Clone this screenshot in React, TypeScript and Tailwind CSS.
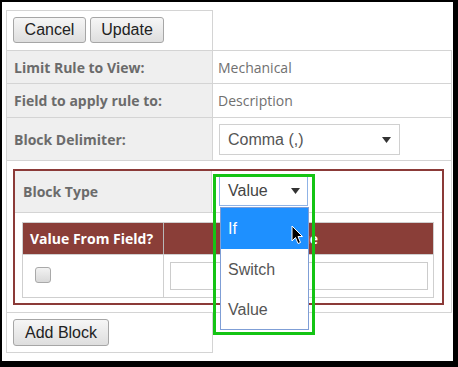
import React from "react";

const label = "font-['Open_Sans',sans-serif] text-[14px] font-bold text-[#6b6b6b]";
const value = "font-['Open_Sans',sans-serif] text-[14px] text-[#707070]";
const btn =
  "h-[26px] border border-[#a6a6a6] rounded-[3px] bg-gradient-to-b from-[#f6f6f6] to-[#dedede] font-['Liberation_Sans',Arial,sans-serif] text-[16px] text-[#222] flex items-center justify-center";

function Arrow() {
  return (
    <svg width="9" height="6" viewBox="0 0 9 6">
      <path d="M0 0 L9 0 L4.5 6 Z" fill="#333" />
    </svg>
  );
}

export default function App() {
  return (
    <div className="w-[458px] h-[367px] bg-black pt-[2px] pl-[2px]">
      <div className="relative w-[451px] h-[359px] bg-white pl-[4px] pt-[8px]">
        <div className="flex flex-col w-[446px]">
          {/* Row 1 */}
          <div className="w-[207px] h-[40px] border-l border-t border-r border-[#d4d4d4] flex gap-[4px] pl-[6px] pt-[6px]">
            <div className={`${btn} w-[73px]`}>Cancel</div>
            <div className={`${btn} w-[74px]`}>Update</div>
          </div>
          {/* Row 2 */}
          <div className="flex h-[33px]">
            <div className={`w-[206px] border-l border-t border-[#d4d4d4] bg-[#efefef] flex items-center pl-[7px] ${label}`}>
              Limit Rule to View:
            </div>
            <div className={`w-[240px] border-l border-r border-t border-[#d4d4d4] flex items-center pl-[5px] ${value}`}>
              Mechanical
            </div>
          </div>
          {/* Row 3 */}
          <div className="flex h-[34px]">
            <div className={`w-[206px] border-l border-t border-[#d4d4d4] bg-[#efefef] flex items-center pl-[7px] ${label}`}>
              Field to apply rule to:
            </div>
            <div className={`w-[240px] border-l border-r border-t border-[#d4d4d4] flex items-center pl-[5px] ${value}`}>
              Description
            </div>
          </div>
          {/* Row 4 */}
          <div className="flex h-[43px]">
            <div className={`w-[206px] border-l border-t border-[#d4d4d4] bg-[#efefef] flex items-center pl-[7px] ${label}`}>
              Block Delimiter:
            </div>
            <div className="w-[240px] border-l border-r border-t border-[#d4d4d4] pl-[6px] pt-[6px]">
              <div className="w-[181px] h-[31px] border border-[#d0d0d0] bg-white flex items-center justify-between pl-[8px] pr-[8px] font-['Liberation_Sans',Arial,sans-serif] text-[16px] text-[#555]">
                <span>Comma (,)</span>
                <Arrow />
              </div>
            </div>
          </div>
          {/* Row 5 */}
          <div className="w-[446px] h-[153px] border border-[#d4d4d4] pl-[6px] pt-[8px]">
            <div className="w-[431px] h-[136px] border-2 border-[#8b3a38] flex flex-col">
              <div className="flex h-[42px] border-b border-[#d4d4d4]">
                <div className={`w-[197px] bg-[#efefef] border-r border-[#d4d4d4] flex items-center pl-[8px] ${label}`}>
                  Block Type
                </div>
                <div className="flex-1 pl-[7px] pt-[5px]">
                  <div className="w-[89px] h-[30px] border border-[#8fb3e6] bg-white flex items-center justify-between pl-[8px] pr-[7px] font-['Liberation_Sans',Arial,sans-serif] text-[16px] text-[#444]">
                    <span>Value</span>
                    <Arrow />
                  </div>
                </div>
              </div>
              <div className="pl-[7px] pt-[9px]">
                <div className="w-[412px] h-[76px] border border-[#cfcfcf] flex flex-col">
                  <div className="flex h-[32px] bg-[#8a3e38] border-b border-[#cfcfcf] font-['Open_Sans',sans-serif] text-[14px] font-bold text-white">
                    <div className="w-[141px] border-r border-[#b8b8b8] flex items-center pl-[7px]">Value From Field?</div>
                    <div className="flex-1 flex items-center justify-center">Value</div>
                  </div>
                  <div className="flex flex-1">
                    <div className="w-[141px] border-r border-[#cfcfcf] pl-[12px] pt-[12px]">
                      <div className="w-[16px] h-[16px] rounded-[3px] border border-[#a9a9a9] bg-gradient-to-b from-[#f2f2f2] to-[#d9d9d9]" />
                    </div>
                    <div className="flex-1 pl-[6px] pt-[7px]">
                      <div className="w-[258px] h-[28px] border border-[#cccccc] bg-white" />
                    </div>
                  </div>
                </div>
              </div>
            </div>
          </div>
          {/* Row 6 */}
          <div className="w-[207px] h-[40px] border-l border-r border-b border-[#d4d4d4] pl-[6px] pt-[6px]">
            <div className={`${btn} w-[96px] h-[27px]`}>Add Block</div>
          </div>
        </div>

        {/* Dropdown list */}
        <div className="absolute left-[218px] top-[205px] w-[89px] h-[123px] border border-[#7f9ed6] bg-white flex flex-col font-['Liberation_Sans',Arial,sans-serif] text-[16px]">
          <div className="h-[41px] bg-[#1e90ff] text-white flex items-center pl-[7px]">If</div>
          <div className="h-[42px] text-[#555] flex items-center pl-[7px]">Switch</div>
          <div className="flex-1 text-[#555] flex items-center pl-[7px]">Value</div>
        </div>

        {/* Green annotation box */}
        <div className="absolute left-[211px] top-[172px] w-[102px] h-[161px] border-[3px] border-[#14c414]" />

        {/* Cursor */}
        <svg className="absolute left-[289px] top-[223px]" width="13" height="20" viewBox="0 0 13 20">
          <path d="M1 1 L1 16 L4.5 12.5 L7 18.5 L9.5 17.5 L7 11.5 L11.5 11.5 Z" fill="#000" stroke="#fff" strokeWidth="1" strokeLinejoin="round" />
        </svg>
      </div>
    </div>
  );
}
